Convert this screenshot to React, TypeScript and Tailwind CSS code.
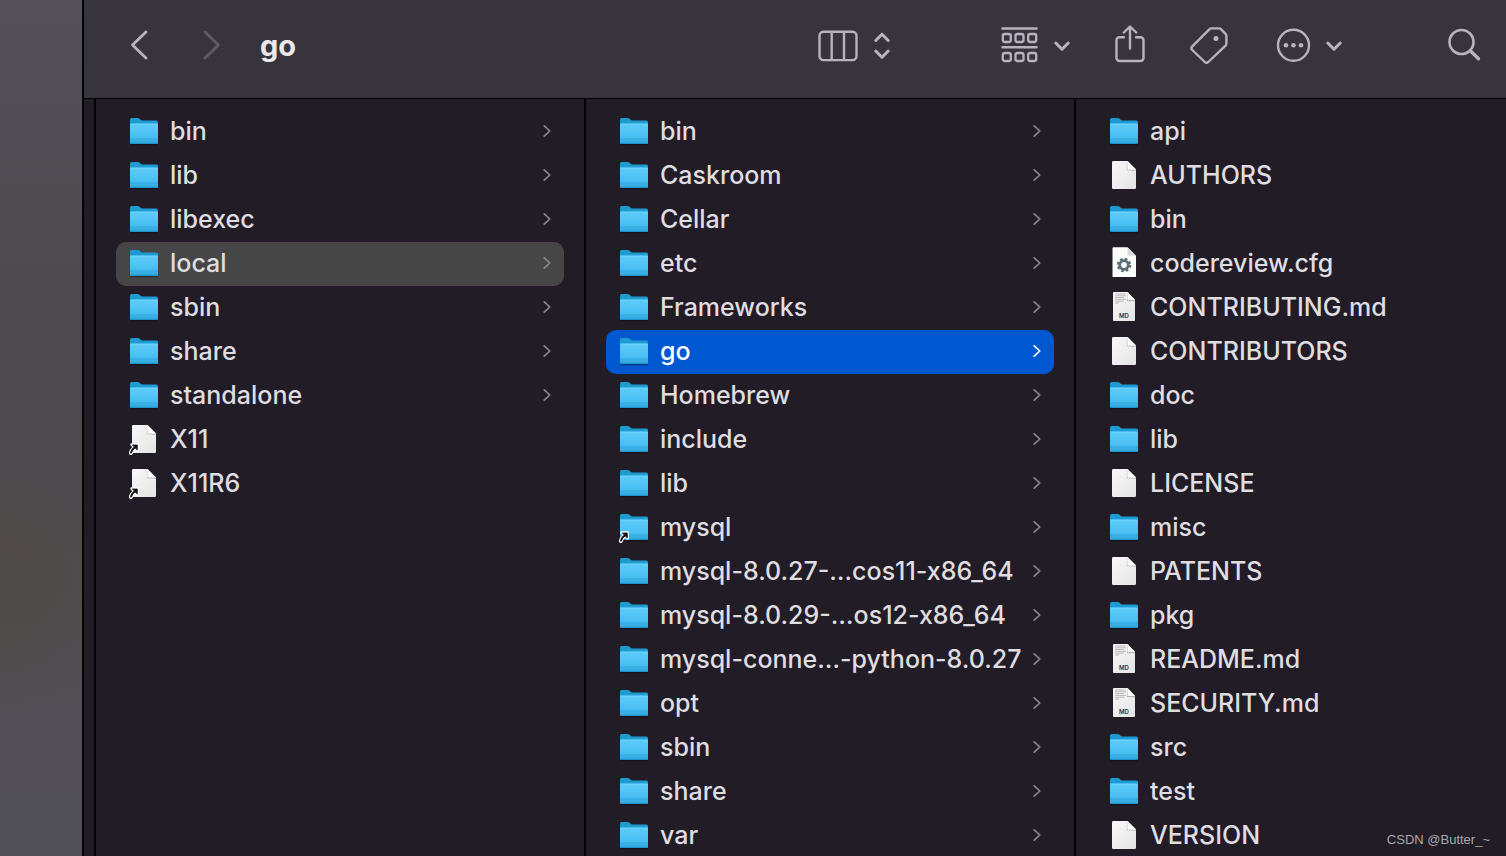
import { useState } from "react";

type Kind = "folder" | "folder-alias" | "doc" | "doc-alias" | "cfg" | "md";
type Entry = { name: string; kind: Kind };

const folder = (name: string): Entry => ({ name, kind: "folder" });
const doc = (name: string): Entry => ({ name, kind: "doc" });
const md = (name: string): Entry => ({ name, kind: "md" });

const usr: Entry[] = [
  ...["bin", "lib", "libexec", "local", "sbin", "share", "standalone"].map(folder),
  { name: "X11", kind: "doc-alias" },
  { name: "X11R6", kind: "doc-alias" },
];

const local: Entry[] = [
  ...["bin", "Caskroom", "Cellar", "etc", "Frameworks", "go", "Homebrew", "include", "lib"].map(folder),
  { name: "mysql", kind: "folder-alias" },
  ...[
    "mysql-8.0.27-…cos11-x86_64",
    "mysql-8.0.29-…os12-x86_64",
    "mysql-conne…-python-8.0.27",
    "opt",
    "sbin",
    "share",
    "var",
  ].map(folder),
];

const go: Entry[] = [
  folder("api"),
  doc("AUTHORS"),
  folder("bin"),
  { name: "codereview.cfg", kind: "cfg" },
  md("CONTRIBUTING.md"),
  doc("CONTRIBUTORS"),
  folder("doc"),
  folder("lib"),
  doc("LICENSE"),
  folder("misc"),
  doc("PATENTS"),
  folder("pkg"),
  md("README.md"),
  md("SECURITY.md"),
  folder("src"),
  folder("test"),
  doc("VERSION"),
];

function AliasBadge() {
  return (
    <g strokeLinejoin="round" strokeLinecap="round">
      <path d="M6.800 24.500Q2.500 26.500 1.800 30" fill="none" stroke="#fff" strokeWidth="4" />
      <path d="M2.600 21.500h6v6z" fill="#fff" stroke="#fff" strokeWidth="2.600" />
      <path d="M3.600 22h4.700v4.700z" fill="#111" stroke="#111" strokeWidth=".8" />
      <path d="M6.600 24Q2.800 26.300 2 29.600" fill="none" stroke="#111" strokeWidth="1.900" />
    </g>
  );
}

function FolderIcon({ alias }: { alias?: boolean }) {
  return (
    <svg width="30" height="32" viewBox="0 0 30 32" aria-hidden="true" className="shrink-0">
      <path d="M1 28h28v1.500a1 1 0 0 1-1 1H2a1 1 0 0 1-1-1z" fill="#000" opacity=".3" />
      <path d="M1 4.500A1.500 1.500 0 0 1 2.500 3h6.300c2 0 2.400 2.500 5 2.500H27.500A1.500 1.500 0 0 1 29 7v6H1z" fill="#1c9bd3" />
      <path d="M1 9.500q0-1 1-1h26q1 0 1 1V27.500a1.500 1.500 0 0 1-1.500 1.500h-25A1.500 1.500 0 0 1 1 27.500z" fill="url(#folderFront)" />
      <path d="M1.500 9.200h27" fill="none" stroke="#74d3fb" strokeWidth=".8" />
      <path d="M1 24h28M1 26h28" stroke="#2c9fd6" strokeWidth=".8" />
      <path d="M1 27.500h28a1.500 1.500 0 0 1-1.500 1.500h-25A1.500 1.500 0 0 1 1 27.500z" fill="#1f93cb" />
      {alias && <AliasBadge />}
    </svg>
  );
}

function ConfigIcon() {
  return (
    <svg width="30" height="32" viewBox="0 0 30 32" aria-hidden="true" className="shrink-0">
      <path d="M3.500 1q0-.8.800-.8H18.500L27 8.800V29.200q0 .8-.8.800H4.300q-.8 0-.8-.8z" fill="#fcfcfc" />
      <path d="M18.500.2v7.600q0 1 1 1H27z" fill="#d9d9d9" />
      <g stroke="#586f76" fill="none">
        <circle cx="15" cy="18" r="4.300" strokeWidth="2.800" />
        <circle cx="15" cy="18" r="6.200" strokeWidth="2" strokeDasharray="2.700 2.170" />
      </g>
    </svg>
  );
}

function MarkdownIcon() {
  return (
    <svg width="30" height="32" viewBox="0 0 30 32" aria-hidden="true" className="shrink-0">
      <path d="M4 2q0-1 1-1H18.500L26 9V29q0 1-1 1H5q-1 0-1-1z" fill="url(#paper)" />
      <path d="M6 3h10.500M6 4.800h11M6 6.600h9M6 8.400h11M6 10.200h9M6 12h4" stroke="#a9a9a9" strokeWidth=".8" />
      <path d="M18 2v8l8 .3V9z" fill="#b5b5b5" />
      <path d="M18.500 1v7q0 1 1 1H26z" fill="#fff" />
      <text x="15" y="27" textAnchor="middle" fontSize="6" fontWeight="600" fill="#333" fontFamily="Inter, sans-serif">
        MD
      </text>
    </svg>
  );
}

function DocIcon({ alias }: { alias?: boolean }) {
  return (
    <svg width="30" height="32" viewBox="0 0 30 32" aria-hidden="true" className="shrink-0">
      <path d="M3 3.200Q3 2 4.200 2H18.500L27 10.500V28.800Q27 30 25.800 30H4.200Q3 30 3 28.800z" fill="url(#paper)" />
      <path d="M17.800 3v8.300L27 12v-1.500z" fill="#c4c4c4" />
      <path d="M18.500 2v7.500q0 1 1 1H27z" fill="#fff" />
      {alias && <AliasBadge />}
    </svg>
  );
}

function EntryIcon({ kind }: { kind: Kind }) {
  switch (kind) {
    case "folder":
    case "folder-alias":
      return <FolderIcon alias={kind === "folder-alias"} />;
    case "cfg":
      return <ConfigIcon />;
    case "md":
      return <MarkdownIcon />;
    default:
      return <DocIcon alias={kind === "doc-alias"} />;
  }
}

function RowChevron({ bright }: { bright: boolean }) {
  return (
    <svg width="8" height="14" viewBox="0 0 8 14" fill="none" aria-hidden="true" className={bright ? "shrink-0 text-white" : "shrink-0 text-[#8b878f]"}>
      <path d="M1.200 1.800 6.800 7 1.200 12.200" stroke="currentColor" strokeWidth="1.700" strokeLinecap="round" strokeLinejoin="round" />
    </svg>
  );
}

type ColumnProps = {
  label: string;
  entries: Entry[];
  selected?: string;
  active?: boolean;
  arrows?: boolean;
  onSelect: (name: string) => void;
};

function Column({ label, entries, selected, active = false, arrows = true, onSelect }: ColumnProps) {
  return (
    <ul aria-label={label} className="min-w-0 border-r-2 border-black px-5 pt-[11px] last:border-r-0">
      {entries.map((entry) => {
        const on = entry.name === selected;
        const tone = on ? (active ? "bg-[#0058d0] text-white" : "bg-[#464646] text-[#dfdde0]") : "text-[#dfdde0]";
        const isFolder = entry.kind.startsWith("folder");
        return (
          <li key={entry.name}>
            <button
              type="button"
              onClick={() => onSelect(entry.name)}
              className={`flex h-11 w-full items-center rounded-[10px] pr-[13px] pb-0.5 pl-[13px] text-left ${tone}`}
            >
              <EntryIcon kind={entry.kind} />
              <span className="ml-[11px] flex-1 text-[25px] leading-8 font-medium whitespace-nowrap">{entry.name}</span>
              {arrows && isFolder && <RowChevron bright={on && active} />}
            </button>
          </li>
        );
      })}
    </ul>
  );
}

function DownChevron() {
  return (
    <svg width="16" height="14" viewBox="0 0 16 14" fill="none" stroke="currentColor" strokeWidth="3" strokeLinecap="round" strokeLinejoin="round" aria-hidden="true">
      <path d="M1.800 5 8 11.300 14.200 5" />
    </svg>
  );
}

function Toolbar() {
  return (
    <header className="flex h-[99px] items-center border-b border-black bg-[#38343e] pr-[25px] pb-2 pl-[46px] text-[#b8b3bf]">
      <button type="button" aria-label="Back">
        <svg width="18" height="30" viewBox="0 0 18 30" fill="none" stroke="currentColor" strokeWidth="2.800" strokeLinecap="round" strokeLinejoin="round">
          <path d="M16 2 2.500 15 16 28" />
        </svg>
      </button>
      <button type="button" aria-label="Forward" disabled className="ml-[55px] text-[#5f5b65]">
        <svg width="18" height="30" viewBox="0 0 18 30" fill="none" stroke="currentColor" strokeWidth="2.800" strokeLinecap="round" strokeLinejoin="round">
          <path d="M2 2 15.500 15 2 28" />
        </svg>
      </button>
      <h1 className="ml-[39px] flex-1 pt-0.5 text-[29px] leading-9 font-bold text-[#ebe9ec]">go</h1>

      <button type="button" aria-label="View as columns" className="flex items-center gap-4">
        <svg width="40" height="34" viewBox="0 0 40 34" fill="none" stroke="currentColor" strokeWidth="2.400" aria-hidden="true">
          <rect x="1.500" y="3.700" width="37" height="28.400" rx="4" />
          <path d="M13.700 4v28M26 4v28" />
        </svg>
        <svg width="16" height="30" viewBox="0 0 16 30" fill="none" stroke="currentColor" strokeWidth="3" strokeLinecap="round" strokeLinejoin="round" aria-hidden="true">
          <path d="M1.800 10.500 8 4.200l6.200 6.300M1.800 21 8 27.300l6.200-6.300" />
        </svg>
      </button>

      <button type="button" aria-label="Group items" className="ml-[111px] flex items-center gap-4">
        <svg width="37" height="36" viewBox="0 0 37 36" fill="none" stroke="currentColor" strokeWidth="2.400" strokeLinecap="round" aria-hidden="true">
          <path d="M1.500 1.500h34M1.500 20.300h34" />
          <g strokeWidth="2.300">
            <rect x="1.800" y="7" width="8" height="8" rx="2" />
            <rect x="14.500" y="7" width="8" height="8" rx="2" />
            <rect x="27.200" y="7" width="8" height="8" rx="2" />
            <rect x="1.800" y="26" width="8" height="8" rx="2" />
            <rect x="14.500" y="26" width="8" height="8" rx="2" />
            <rect x="27.200" y="26" width="8" height="8" rx="2" />
          </g>
        </svg>
        <DownChevron />
      </button>

      <button type="button" aria-label="Share" className="ml-[45px]">
        <svg width="30" height="40" viewBox="0 0 30 40" fill="none" stroke="currentColor" strokeWidth="2.400" strokeLinecap="round" strokeLinejoin="round">
          <path d="M9 12.200H4.500a3 3 0 0 0-3 3V33a3 3 0 0 0 3 3h21a3 3 0 0 0 3-3V15.200a3 3 0 0 0-3-3H21" />
          <path d="M15 23.500V2M8.800 7.500 15 1.500l6.200 6" />
        </svg>
      </button>

      <button type="button" aria-label="Edit tags" className="ml-[45px]">
        <svg width="38" height="38" viewBox="0 0 38 38" fill="none" stroke="currentColor" strokeWidth="2.400" strokeLinecap="round" strokeLinejoin="round">
          <path d="M21.500 2.400H29q1.300 0 2.200.9l4.300 4.500q.9 1 .9 2.200v7.500q0 1.200-.9 2.100L18.300 36q-1.700 1.700-3.500 0L2.300 24q-1.800-1.800 0-3.600L19.300 3.400q.9-1 2.200-1z" />
          <circle cx="26" cy="12.500" r="2.500" fill="currentColor" stroke="none" />
        </svg>
      </button>

      <button type="button" aria-label="More actions" className="ml-[48px] flex items-center gap-[15px]">
        <svg width="35" height="36" viewBox="0 0 35 36" fill="none" aria-hidden="true">
          <circle cx="17.500" cy="18.300" r="15.500" stroke="currentColor" strokeWidth="2.400" />
          <g fill="currentColor">
            <circle cx="10" cy="18.300" r="2.300" />
            <circle cx="17.500" cy="18.300" r="2.300" />
            <circle cx="25" cy="18.300" r="2.300" />
          </g>
        </svg>
        <DownChevron />
      </button>

      <button type="button" aria-label="Search" className="ml-[105px]">
        <svg width="34" height="34" viewBox="0 0 34 34" fill="none" stroke="currentColor" strokeLinecap="round">
          <circle cx="14.500" cy="14" r="12" strokeWidth="2.600" />
          <path d="m23.500 23 8 7.800" strokeWidth="3.400" />
        </svg>
      </button>
    </header>
  );
}

export default function App() {
  const [usrPick, setUsrPick] = useState("local");
  const [localPick, setLocalPick] = useState("go");
  const [goPick, setGoPick] = useState("");

  return (
    <div className="relative flex h-screen overflow-hidden bg-[#221c27] font-['Inter',sans-serif]">
      <svg width="0" height="0" className="absolute" aria-hidden="true">
        <defs>
          <linearGradient id="folderFront" x1="0" y1="0" x2="0" y2="1">
            <stop offset="0" stopColor="#5fcdfb" />
            <stop offset="1" stopColor="#3db5ea" />
          </linearGradient>
          <linearGradient id="paper" x1="0" y1="0" x2="1" y2="1">
            <stop offset="0" stopColor="#f8f8f8" />
            <stop offset="1" stopColor="#e4e4e4" />
          </linearGradient>
        </defs>
      </svg>

      <aside
        aria-label="Sidebar"
        className="w-[84px] shrink-0 border-r-2 border-black bg-[radial-gradient(ellipse_110px_130px_at_0_68%,#4f4b47,transparent),linear-gradient(#545158,#4c494f_38%,#504b4e_68%,#535057_85%,#525057)]"
      />

      <div className="flex min-w-0 flex-1 flex-col">
        <Toolbar />
        <main className="ml-[10px] grid min-h-0 flex-1 grid-cols-[minmax(0,49fr)_minmax(0,49fr)_minmax(0,43fr)] overflow-hidden border-l-2 border-black">
          <Column label="usr" entries={usr} selected={usrPick} onSelect={setUsrPick} />
          <Column label="local" entries={local} selected={localPick} active onSelect={setLocalPick} />
          <Column label="go" entries={go} selected={goPick} arrows={false} onSelect={setGoPick} />
        </main>
      </div>

      <p className="absolute right-4 bottom-2 font-['Liberation_Sans',sans-serif] text-[13px] leading-4 text-[#aaa8ac]">CSDN @Butter_~</p>
    </div>
  );
}
